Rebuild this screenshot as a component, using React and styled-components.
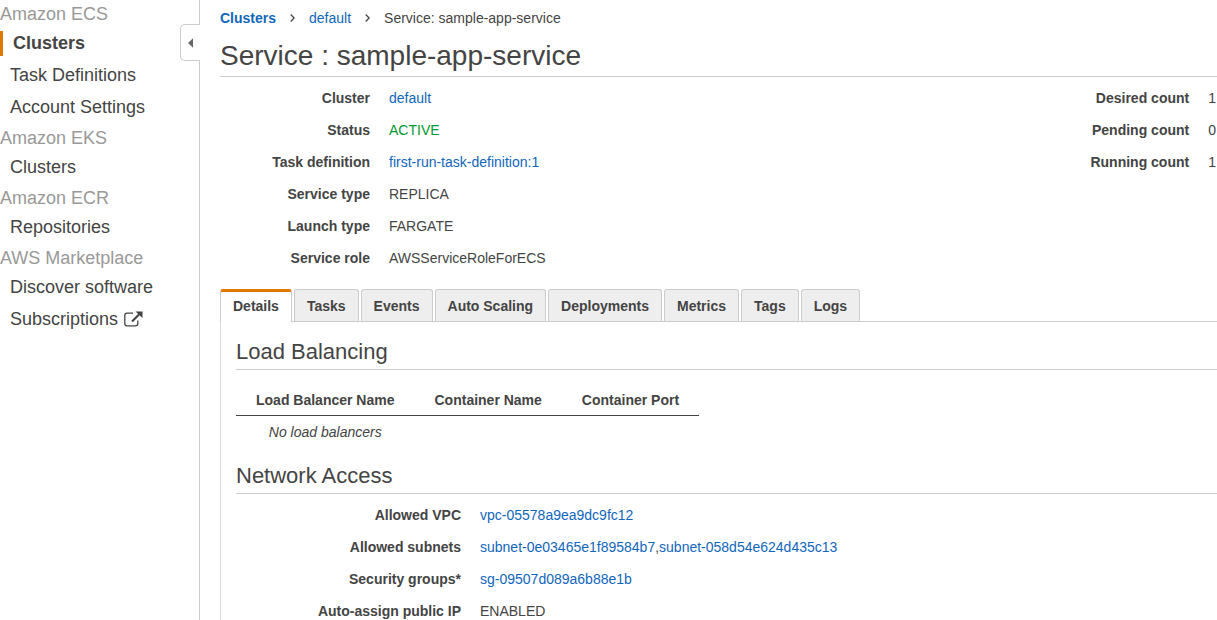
import React from 'react';
import styled, { createGlobalStyle } from 'styled-components';

const Global = createGlobalStyle`
  * { box-sizing: border-box; }
  body {
    margin: 0;
    background: #fff;
    color: #444;
    font: 14px/20px "Liberation Sans", Arial, sans-serif;
  }
  a { color: #16b; text-decoration: none; }
`;

const Shell = styled.div`
  display: flex;
  height: 100vh;
  overflow: hidden;
`;

const Sidebar = styled.nav`
  position: relative;
  flex: 0 0 200px;
  border-right: 1px solid #ccc;
  font-size: 18px;
`;

const GroupTitle = styled.h3`
  margin: 0;
  padding-top: 1px;
  font-size: 18px;
  font-weight: normal;
  line-height: 26px;
  color: #999;
`;

const Group = styled.ul`
  margin: 0 0 1px;
  padding: 0;
  list-style: none;
`;

const NavItem = styled.li`
  display: flex;
  align-items: center;
  height: 32px;
  a {
    display: flex;
    align-items: center;
    gap: 6px;
    padding-left: 10px;
    border-left: ${p => (p.$active ? '3px solid #e07700' : '0')};
    font-weight: ${p => (p.$active ? 'bold' : 'normal')};
    line-height: 25px;
    color: #444;
  }
`;

const Collapse = styled.button`
  position: absolute;
  top: 24px;
  right: -1px;
  display: flex;
  align-items: center;
  width: 20px;
  height: 37px;
  padding: 0 0 0 7px;
  border: 1px solid #ccc;
  border-right: 0;
  border-radius: 5px 0 0 5px;
  background: #fff;
`;

const Main = styled.main`
  flex: 1;
  min-width: 0;
  padding: 8px 0 0 20px;
`;

const Breadcrumb = styled.nav`
  display: flex;
  align-items: center;
  gap: 14px;
`;

const PageTitle = styled.h1`
  margin: 8px 0 0;
  border-bottom: 1px solid #ccc;
  font-size: 28px;
  font-weight: normal;
  line-height: 40px;
`;

const Summary = styled.div`
  display: flex;
  justify-content: space-between;
  margin-bottom: 15px;
`;

const Fields = styled.dl`
  display: grid;
  grid-template-columns: ${p => p.$label} auto;
  column-gap: 19px;
  align-content: start;
  justify-content: start;
  margin: 5px 0 0;
  padding-right: ${p => p.$inset || '0'};
  line-height: 32px;
  dt { font-weight: bold; text-align: right; }
  dd { margin: 0; }
`;

const Status = styled.span`
  color: #093;
`;

const TabList = styled.div`
  display: flex;
  gap: 2px;
  border-bottom: 1px solid #ccc;
`;

const Tab = styled.button`
  height: ${p => (p.$active ? '33px' : '32px')};
  margin-bottom: ${p => (p.$active ? '-1px' : '0')};
  padding: ${p => (p.$active ? '0 12px 2px' : '0 12px')};
  border: 1px solid #ccc;
  border-bottom: 0;
  border-top: ${p => (p.$active ? '3px solid #e07700' : '1px solid #ccc')};
  border-radius: 3px 3px 0 0;
  background: ${p => (p.$active ? '#fff' : '#eee')};
  color: #444;
  font: bold 14px/20px "Liberation Sans", Arial, sans-serif;
`;

const Panel = styled.div`
  padding: 15px 0 0 15px;
  border-left: 1px solid #ddd;
`;

const SectionTitle = styled.h2`
  margin: 0;
  padding-bottom: 2px;
  border-bottom: 1px solid #ccc;
  font-size: 22px;
  font-weight: normal;
  line-height: 30px;
`;

const Balancers = styled.table`
  margin: 14px 0 13px;
  border-collapse: separate;
  border-spacing: 0;
  th {
    padding: 2px 20px 0;
    border-bottom: 1px solid #444;
    line-height: 29px;
    text-align: left;
  }
  td {
    padding: 0;
    line-height: 32px;
    font-style: italic;
    text-align: center;
  }
`;

const Chevron = () => (
  <svg width="5" height="8" viewBox="0 0 5 8" fill="none" stroke="#444" strokeWidth="1.3" aria-hidden="true">
    <path d="M.7.5 4.2 4 .7 7.5" />
  </svg>
);

const External = () => (
  <svg width="19" height="16" viewBox="0 0 19 16" fill="none" stroke="#444" aria-hidden="true">
    <path d="M9 2.2H3A2.3 2.3 0 0 0 .8 4.5v8A2.3 2.3 0 0 0 3 14.8h8.5a2.3 2.3 0 0 0 2.3-2.3V9.5" strokeWidth="1.3" />
    <path d="M8 10.5 15 3.5" strokeWidth="2.2" />
    <path d="M11.5.5H18.5V7z" fill="#444" stroke="none" />
  </svg>
);

const menu = [
  ['Amazon ECS', ['Clusters', 'Task Definitions', 'Account Settings']],
  ['Amazon EKS', ['Clusters']],
  ['Amazon ECR', ['Repositories']],
  ['AWS Marketplace', ['Discover software', 'Subscriptions']],
];

const tabs = ['Details', 'Tasks', 'Events', 'Auto Scaling', 'Deployments', 'Metrics', 'Tags', 'Logs'];

export default function App() {
  return (
    <>
      <Global />
      <Shell>
        <Sidebar aria-label="Services">
          {menu.map(([title, items], g) => (
            <React.Fragment key={title}>
              <GroupTitle>{title}</GroupTitle>
              <Group>
                {items.map((item, i) => (
                  <NavItem key={item} $active={g === 0 && i === 0}>
                    <a href="#">
                      {item}
                      {item === 'Subscriptions' && <External />}
                    </a>
                  </NavItem>
                ))}
              </Group>
            </React.Fragment>
          ))}
          <Collapse type="button" aria-label="Collapse navigation">
            <svg width="5" height="10" viewBox="0 0 5 10" aria-hidden="true">
              <path d="M5 .3v9.4L0 5z" fill="#666" />
            </svg>
          </Collapse>
        </Sidebar>
        <Main>
          <Breadcrumb aria-label="Breadcrumb">
            <a href="#"><b>Clusters</b></a>
            <Chevron />
            <a href="#">default</a>
            <Chevron />
            <span>Service: sample-app-service</span>
          </Breadcrumb>
          <PageTitle>Service : sample-app-service</PageTitle>
          <Summary>
            <Fields $label="150px">
              <dt>Cluster</dt><dd><a href="#">default</a></dd>
              <dt>Status</dt><dd><Status>ACTIVE</Status></dd>
              <dt>Task definition</dt><dd><a href="#">first-run-task-definition:1</a></dd>
              <dt>Service type</dt><dd>REPLICA</dd>
              <dt>Launch type</dt><dd>FARGATE</dd>
              <dt>Service role</dt><dd>AWSServiceRoleForECS</dd>
            </Fields>
            <Fields $label="auto" $inset="1px">
              <dt>Desired count</dt><dd>1</dd>
              <dt>Pending count</dt><dd>0</dd>
              <dt>Running count</dt><dd>1</dd>
            </Fields>
          </Summary>
          <TabList role="tablist">
            {tabs.map((t, i) => (
              <Tab key={t} type="button" role="tab" aria-selected={i === 0} $active={i === 0}>{t}</Tab>
            ))}
          </TabList>
          <Panel role="tabpanel">
            <SectionTitle>Load Balancing</SectionTitle>
            <Balancers>
              <thead>
                <tr><th>Load Balancer Name</th><th>Container Name</th><th>Container Port</th></tr>
              </thead>
              <tbody>
                <tr><td>No load balancers</td><td /><td /></tr>
              </tbody>
            </Balancers>
            <SectionTitle>Network Access</SectionTitle>
            <Fields $label="225px">
              <dt>Allowed VPC</dt><dd><a href="#">vpc-05578a9ea9dc9fc12</a></dd>
              <dt>Allowed subnets</dt>
              <dd><a href="#">subnet-0e03465e1f89584b7</a>,<a href="#">subnet-058d54e624d435c13</a></dd>
              <dt>Security groups*</dt><dd><a href="#">sg-09507d089a6b88e1b</a></dd>
              <dt>Auto-assign public IP</dt><dd>ENABLED</dd>
            </Fields>
          </Panel>
        </Main>
      </Shell>
    </>
  );
}
